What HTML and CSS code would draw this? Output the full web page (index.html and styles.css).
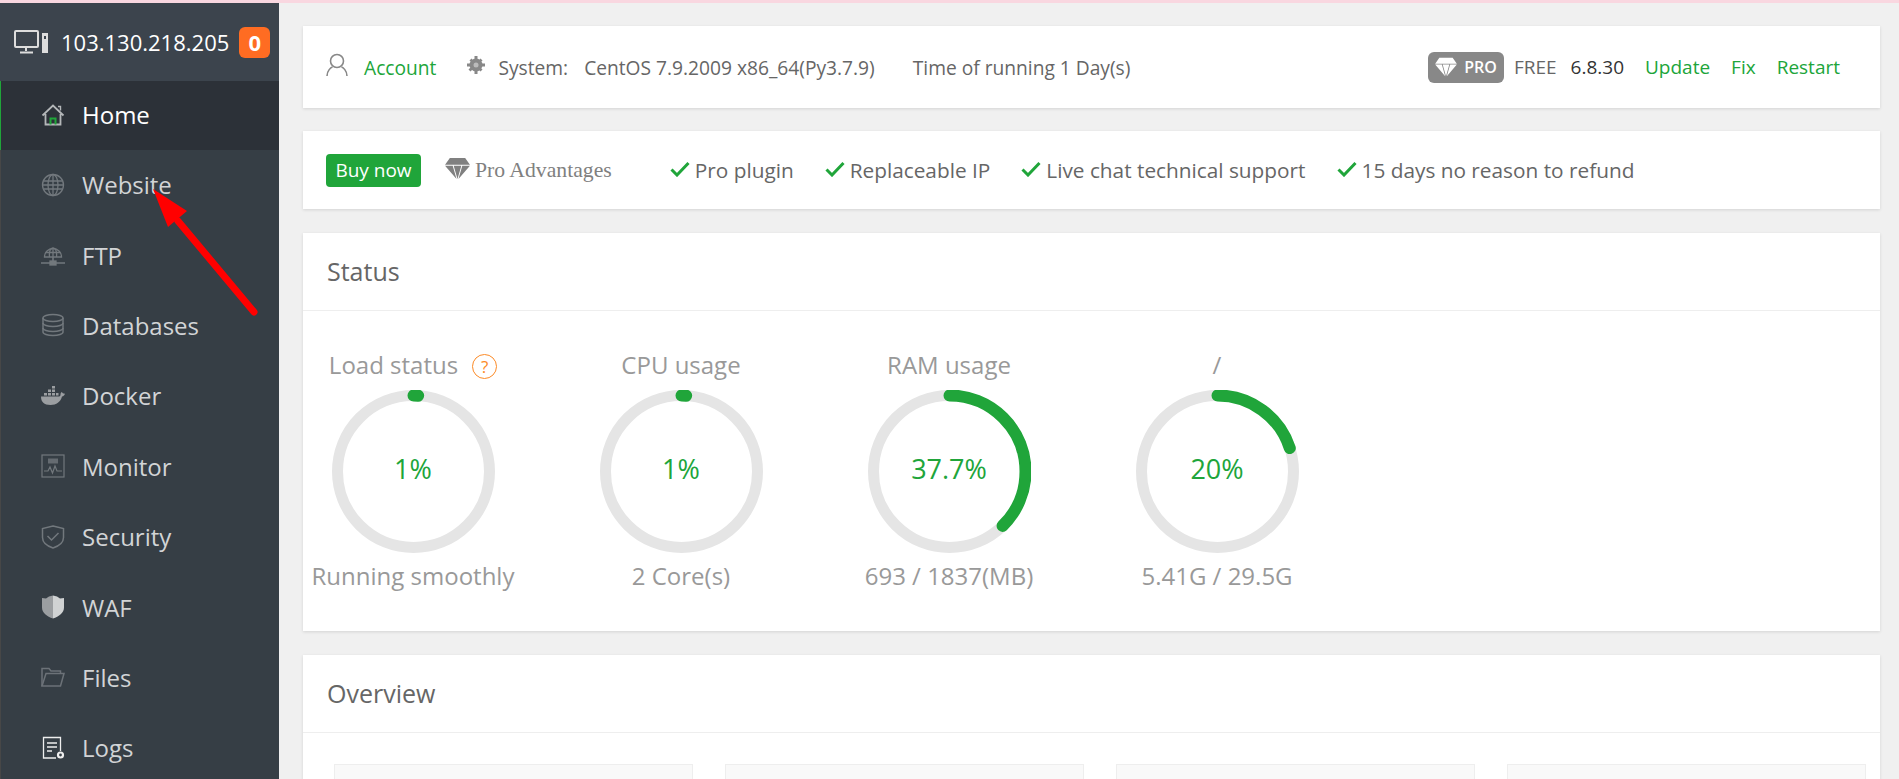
FILE: index.html
```html
<!DOCTYPE html>
<html lang="en">
<head>
    <meta charset="UTF-8">
    <title>aaPanel Linux panel</title>
    <link rel="stylesheet" href="styles.css">
</head>
<body>
    <div class="top-strip"></div>
    <div class="app">
        <aside class="sidebar">
            <div class="server">
                <svg class="server-icon" viewBox="0 0 34 24" fill="none" stroke="#ddd" stroke-width="2">
                    <rect x="1" y="1" width="23" height="16" rx="1"/>
                    <path d="M12 17v4M6 22.500h13" stroke-width="2"/>
                    <rect x="28" y="3" width="6" height="20" fill="#ddd" stroke="none"/>
                    <rect x="30" y="6" width="2" height="3" fill="#3c444d" stroke="none"/>
                </svg>
                <span class="server-ip">103.130.218.205</span>
                <span class="server-badge">0</span>
            </div>
            <nav class="menu">
                <a class="menu-item active">
                    <svg class="menu-icon" viewBox="0 0 24 24" fill="none" stroke="#b4b7b9" stroke-width="1.800">
                        <path d="M1.500 12.500 12 2.500l10.500 10M4.500 11v10.500h15V11"/>
                        <path d="M17 3.500h2.500v4" stroke-width="1.400"/>
                        <path d="M9.500 21.500v-6h5v6" stroke="#20a53a" stroke-width="2"/>
                    </svg>
                    Home
                </a>
                <a class="menu-item">
                    <svg class="menu-icon" viewBox="0 0 24 24" fill="none" stroke="#72787d" stroke-width="1.300">
                        <circle cx="12" cy="12" r="10.500"/>
                        <ellipse cx="12" cy="12" rx="5" ry="10.500"/>
                        <path d="M12 1.500v21M2.500 8h19M2.500 16h19M1.500 12h21"/>
                    </svg>
                    Website
                </a>
                <a class="menu-item">
                    <svg class="menu-icon" viewBox="0 0 24 24" fill="none" stroke="#72787d" stroke-width="1.300">
                        <path d="M3.500 14a8.500 8.500 0 1 1 17 0z"/>
                        <path d="M8.500 14c-.6-6 1-9 3.500-9s4.100 3 3.500 9M12 5v9M4.500 9.500h15"/>
                        <path d="M0 20h24M12 14v4" stroke-width="1.600"/>
                        <rect x="9" y="18" width="6" height="4" fill="#72787d"/>
                    </svg>
                    FTP
                </a>
                <a class="menu-item">
                    <svg class="menu-icon" viewBox="0 0 24 24" fill="none" stroke="#72787d" stroke-width="1.500">
                        <ellipse cx="12" cy="5" rx="10" ry="3.500"/>
                        <path d="M2 5v14c0 2 4.500 3.500 10 3.500S22 21 22 19V5"/>
                        <path d="M2 10c0 2 4.500 3.500 10 3.500S22 12 22 10M2 15c0 2 4.500 3.500 10 3.500S22 17 22 15"/>
                    </svg>
                    Databases
                </a>
                <a class="menu-item">
                    <svg class="menu-icon" viewBox="0 0 24 24" fill="#9b9ea1">
                        <path d="M0 12.500h18c1 0 1.500-.8 1.500-2 0-1.500.8-2.300 1.500-2.500.4 1 1 1.500 3 1.800-.5 1.500-1.500 2.500-3 2.700C19.500 18 15.500 21 9.500 21 3 21 0 18 0 12.500z"/>
                        <path d="M3 9h3v2.500H3zM7 9h3v2.500H7zM11 9h3v2.500h-3zM7 5.500h3V8H7zM11 5.500h3V8h-3zM11 2h3v2.500h-3zM15 9h2.500v2.500H15z"/>
                    </svg>
                    Docker
                </a>
                <a class="menu-item">
                    <svg class="menu-icon" viewBox="0 0 24 24" fill="none" stroke="#72787d" stroke-width="1.200">
                        <rect x="1" y="1" width="22" height="22"/>
                        <rect x="7" y="4.500" width="10" height="5" fill="#656b71" stroke="none"/>
                        <path d="M3 17h4l2 -4 2.500 6 2.500-7 2 5h5"/>
                    </svg>
                    Monitor
                </a>
                <a class="menu-item">
                    <svg class="menu-icon" viewBox="0 0 24 24" fill="none" stroke="#72787d" stroke-width="1.500">
                        <path d="M12 1 22.500 3.500v9c0 5-4.500 8.500-10.500 10.500C6 21 1.500 17.500 1.500 12.500v-9z"/>
                        <path d="m6.500 11 4 4 7-7"/>
                    </svg>
                    Security
                </a>
                <a class="menu-item">
                    <svg class="menu-icon" viewBox="0 0 24 24">
                        <path d="M12 .5v23C6 21.500 1 18 1 12.500V3l4 .5 3-2z" fill="#9b9ea1"/>
                        <path d="M12 .5v23c6-2 11-5.500 11-11V3l-4 .5-3-2z" fill="#d0d2d3"/>
                    </svg>
                    WAF
                </a>
                <a class="menu-item">
                    <svg class="menu-icon" viewBox="0 0 24 24" fill="none" stroke="#6c7278" stroke-width="1.500">
                        <path d="M1 21V3.500h7l2 2.500h9.500v2.500"/>
                        <path d="M1 21 5 8.500h18L19.500 21z"/>
                    </svg>
                    Files
                </a>
                <a class="menu-item">
                    <svg class="menu-icon" viewBox="0 0 24 24" fill="none" stroke="#eee" stroke-width="1.300">
                        <path d="M15 22H2.500V1.500h17V15"/>
                        <path d="M6 7h10M6 11h10M6 15h5"/>
                        <circle cx="19.500" cy="19" r="2.500" stroke-width="2.200"/>
                    </svg>
                    Logs
                </a>
            </nav>
        </aside>

        <main class="content">
            <section class="card info-bar">
                <svg class="user-icon" viewBox="0 0 22 24" fill="none" stroke="#888" stroke-width="1.600">
                    <circle cx="11" cy="8" r="6.500"/>
                    <path d="M1 23c0-5.500 4-8.500 5.500-9M21 23c0-5.500-4-8.500-5.500-9"/>
                </svg>
                <a class="link account">Account</a>
                <svg class="gear-icon" viewBox="0 0 20 20" fill="#888">
                    <circle cx="10" cy="10" r="6.500"/>
                    <path d="M8.500 1h3v4h-3zM8.500 15h3v4h-3zM1 8.500h4v3H1zM15 8.500h4v3h-4zM3.500 5.500l2-2 3 3-2 2zM11.500 13.500l2-2 3 3-2 2zM14.500 3.500l2 2-3 3-2-2zM5.500 11.500l2 2-3 3-2-2z"/>
                    <circle cx="10" cy="10" r="2.500" fill="#bbb"/>
                </svg>
                <span class="sys-label">System:</span>
                <span class="sys-value">CentOS 7.9.2009 x86_64(Py3.7.9)</span>
                <span class="uptime">Time of running 1 Day(s)</span>
                <div class="info-right">
                    <span class="pro-badge">
                        <svg class="pro-gem" viewBox="0 0 28 24" fill="#fff">
                            <path d="M6 1h16l5 7H1zM1 9h8l4 14zM10 9h8l-4 14zM19 9h8L15 23z"/>
                        </svg>
                        PRO
                    </span>
                    <span class="free">FREE</span>
                    <span class="version">6.8.30</span>
                    <a class="link">Update</a>
                    <a class="link">Fix</a>
                    <a class="link">Restart</a>
                </div>
            </section>

            <section class="card promo-bar">
                <a class="buy-btn">Buy now</a>
                <svg class="promo-gem" viewBox="0 0 28 24" fill="#808080">
                    <path d="M6 1h16l5 7H1zM1 9h8l4 14zM10 9h8l-4 14zM19 9h8L15 23z"/>
                </svg>
                <span class="promo-title">Pro Advantages</span>
                <ul class="promo-list">
                    <li><svg class="check" viewBox="0 0 20 16"><path d="M1.500 8.500 7 14 18.500 2"/></svg>Pro plugin</li>
                    <li><svg class="check" viewBox="0 0 20 16"><path d="M1.500 8.500 7 14 18.500 2"/></svg>Replaceable IP</li>
                    <li><svg class="check" viewBox="0 0 20 16"><path d="M1.500 8.500 7 14 18.500 2"/></svg>Live chat technical support</li>
                    <li><svg class="check" viewBox="0 0 20 16"><path d="M1.500 8.500 7 14 18.500 2"/></svg>15 days no reason to refund</li>
                </ul>
            </section>

            <section class="card">
                <h2 class="card-title">Status</h2>
                <div class="gauges">
                    <div class="gauge">
                        <div class="gauge-title">Load status<span class="help">?</span></div>
                        <div class="ring">
                            <svg viewBox="0 0 163 163">
                                <circle class="ring-track" cx="81.500" cy="81.500" r="76"/>
                                <circle class="ring-bar" cx="81.500" cy="81.500" r="76" pathLength="100" stroke-dasharray="1 100"/>
                            </svg>
                            <span class="ring-value">1%</span>
                        </div>
                        <div class="gauge-sub">Running smoothly</div>
                    </div>
                    <div class="gauge">
                        <div class="gauge-title">CPU usage</div>
                        <div class="ring">
                            <svg viewBox="0 0 163 163">
                                <circle class="ring-track" cx="81.500" cy="81.500" r="76"/>
                                <circle class="ring-bar" cx="81.500" cy="81.500" r="76" pathLength="100" stroke-dasharray="1 100"/>
                            </svg>
                            <span class="ring-value">1%</span>
                        </div>
                        <div class="gauge-sub">2 Core(s)</div>
                    </div>
                    <div class="gauge">
                        <div class="gauge-title">RAM usage</div>
                        <div class="ring">
                            <svg viewBox="0 0 163 163">
                                <circle class="ring-track" cx="81.500" cy="81.500" r="76"/>
                                <circle class="ring-bar" cx="81.500" cy="81.500" r="76" pathLength="100" stroke-dasharray="37.7 100"/>
                            </svg>
                            <span class="ring-value">37.7%</span>
                        </div>
                        <div class="gauge-sub">693 / 1837(MB)</div>
                    </div>
                    <div class="gauge">
                        <div class="gauge-title">/</div>
                        <div class="ring">
                            <svg viewBox="0 0 163 163">
                                <circle class="ring-track" cx="81.500" cy="81.500" r="76"/>
                                <circle class="ring-bar" cx="81.500" cy="81.500" r="76" pathLength="100" stroke-dasharray="20 100"/>
                            </svg>
                            <span class="ring-value">20%</span>
                        </div>
                        <div class="gauge-sub">5.41G / 29.5G</div>
                    </div>
                </div>
            </section>

            <section class="card">
                <h2 class="card-title">Overview</h2>
                <div class="overview">
                    <div class="overview-box"></div>
                    <div class="overview-box"></div>
                    <div class="overview-box"></div>
                    <div class="overview-box"></div>
                </div>
            </section>
        </main>
    </div>

    <!-- red annotation arrow drawn over the screenshot -->
    <svg class="arrow" viewBox="0 0 120 140">
        <path d="M104 125 28 34" stroke="#f00" stroke-width="7" stroke-linecap="round"/>
        <path d="M3 2 18 40 37 24z" fill="#f00"/>
    </svg>
</body>
</html>
```

FILE: styles.css
```css
:root {
    --green: #20a53a;
    --sidebar: #363e45;
    --text: #666;
    --muted: #999;
}

* {
    margin: 0;
    padding: 0;
    box-sizing: border-box;
}

html, body {
    height: 100%;
    overflow: hidden;
}

body {
    background-color: #f0f0f0;
    color: var(--text);
    font-family: "Open Sans", "Noto Sans", sans-serif;
}

a {
    cursor: pointer;
    text-decoration: none;
}

.top-strip {
    height: 3px;
    background-color: #f9d7e0;
}

.app {
    display: flex;
    height: calc(100% - 3px);
}

/* sidebar */
.sidebar {
    flex: 0 0 279px;
    background-color: var(--sidebar);
    overflow: hidden;
}

.server {
    display: flex;
    align-items: center;
    height: 78px;
    padding-left: 14px;
    background-color: #3c444d;
    color: #fff;
}

.server-icon {
    width: 34px;
    height: 24px;
    margin-right: 13px;
}

.server-ip {
    font-size: 22px;
}

.server-badge {
    width: 31px;
    height: 31px;
    margin-left: 10px;
    background-color: #ff6c22;
    border-radius: 6px;
    font-size: 22px;
    font-weight: 700;
    line-height: 30px;
    text-align: center;
}

.menu-item {
    display: flex;
    align-items: center;
    height: 70.4px;
    padding: 0 0 1px 40px;
    border-left: 1px solid #474747;
    color: #d2d4d6;
    font-size: 24px;
}

.menu-item.active {
    height: 69px;
    padding-bottom: 2px;
    background-color: #2c3138;
    border-left-color: var(--green);
    color: #fff;
}

.menu-icon {
    flex: none;
    width: 24px;
    height: 24px;
    margin-right: 17px;
}

/* cards */
.content {
    flex: 1;
    padding: 23px 19px 0 24px;
    overflow: hidden;
}

.card {
    margin-bottom: 24px;
    background-color: #fff;
    box-shadow: 0 1px 3px rgba(0, 0, 0, 0.12);
}

.info-bar {
    display: flex;
    align-items: center;
    height: 82px;
    margin-bottom: 23px;
    padding: 0 40px 0 23px;
    font-size: 19.200px;
}

.link {
    color: var(--green);
}

.user-icon {
    width: 22px;
    height: 24px;
    margin-right: 16px;
    margin-bottom: 4px;
}

.gear-icon {
    width: 20px;
    height: 20px;
    margin: 0 12px 4px 30px;
}

.sys-value {
    margin-left: 16px;
}

.uptime {
    margin-left: 38px;
}

.info-right {
    display: flex;
    align-items: center;
    margin-left: auto;
    font-size: 19px;
}

.info-right .link {
    margin-left: 21px;
}

.pro-badge {
    display: flex;
    align-items: center;
    height: 31px;
    padding: 0 7px 0 6px;
    background-color: #888;
    border-radius: 6px;
    color: #fff;
    font-size: 16px;
    font-weight: 600;
}

.pro-gem {
    width: 24px;
    height: 20px;
    margin-right: 6px;
}

.free {
    margin-left: 10px;
}

.version {
    margin-left: 14px;
    color: #333;
}

.promo-bar {
    display: flex;
    align-items: center;
    height: 78px;
    padding-left: 23px;
}

.buy-btn {
    width: 95px;
    height: 33px;
    background-color: var(--green);
    border-radius: 4px;
    color: #fff;
    font-size: 19px;
    line-height: 32px;
    text-align: center;
}

.promo-gem {
    width: 27px;
    height: 23px;
    margin-left: 23px;
    margin-bottom: 4px;
}

.promo-title {
    margin-left: 4px;
    color: #808080;
    font-family: "Liberation Serif", serif;
    font-size: 21.700px;
}

.promo-list {
    display: flex;
    margin-left: 58px;
    list-style: none;
    font-size: 20.800px;
}

.promo-list li {
    display: flex;
    align-items: center;
    margin-right: 31px;
}

.check {
    width: 20px;
    height: 16px;
    margin-right: 5px;
    margin-bottom: 3px;
    fill: none;
    stroke: var(--green);
    stroke-width: 3;
}

.card-title {
    height: 78px;
    padding-left: 24px;
    border-bottom: 1px solid #eee;
    font-size: 25px;
    font-weight: 400;
    line-height: 77px;
}

/* status gauges */
.gauges {
    display: flex;
    gap: 48px;
    height: 320px;
    padding-top: 41px;
    color: var(--muted);
    font-size: 24px;
}

.gauge {
    display: flex;
    flex-direction: column;
    align-items: center;
    width: 220px;
}

.gauge-title,
.gauge-sub {
    height: 28px;
    line-height: 26px;
    white-space: nowrap;
}

.help {
    display: inline-block;
    width: 25px;
    height: 25px;
    margin-left: 14px;
    border: 1px solid #fc8a26;
    border-radius: 50%;
    color: #fc8a26;
    font-size: 17px;
    line-height: 23px;
    text-align: center;
    vertical-align: 1px;
}

.ring {
    position: relative;
    display: flex;
    align-items: center;
    justify-content: center;
    width: 163px;
    height: 163px;
    margin: 10px 0;
    color: var(--green);
    font-size: 27px;
}

.ring svg {
    position: absolute;
    inset: 0;
    transform: rotate(-90deg);
}

.ring-track,
.ring-bar {
    fill: none;
    stroke-width: 11;
}

.ring-track {
    stroke: #e5e5e5;
}

.ring-bar {
    stroke: var(--green);
    stroke-width: 12;
    stroke-linecap: round;
}

.ring-value {
    position: relative;
    margin-bottom: 7px;
}

/* overview boxes, cut off by the bottom of the window */
.overview {
    display: grid;
    grid-template-columns: repeat(4, 359px);
    gap: 32px;
    padding: 31px 16px 0 31px;
}

.overview-box {
    height: 160px;
    background-color: #f9f9f9;
    border: 1px solid #eee;
}

.arrow {
    position: absolute;
    top: 187px;
    left: 150px;
    width: 120px;
    height: 140px;
}
```
